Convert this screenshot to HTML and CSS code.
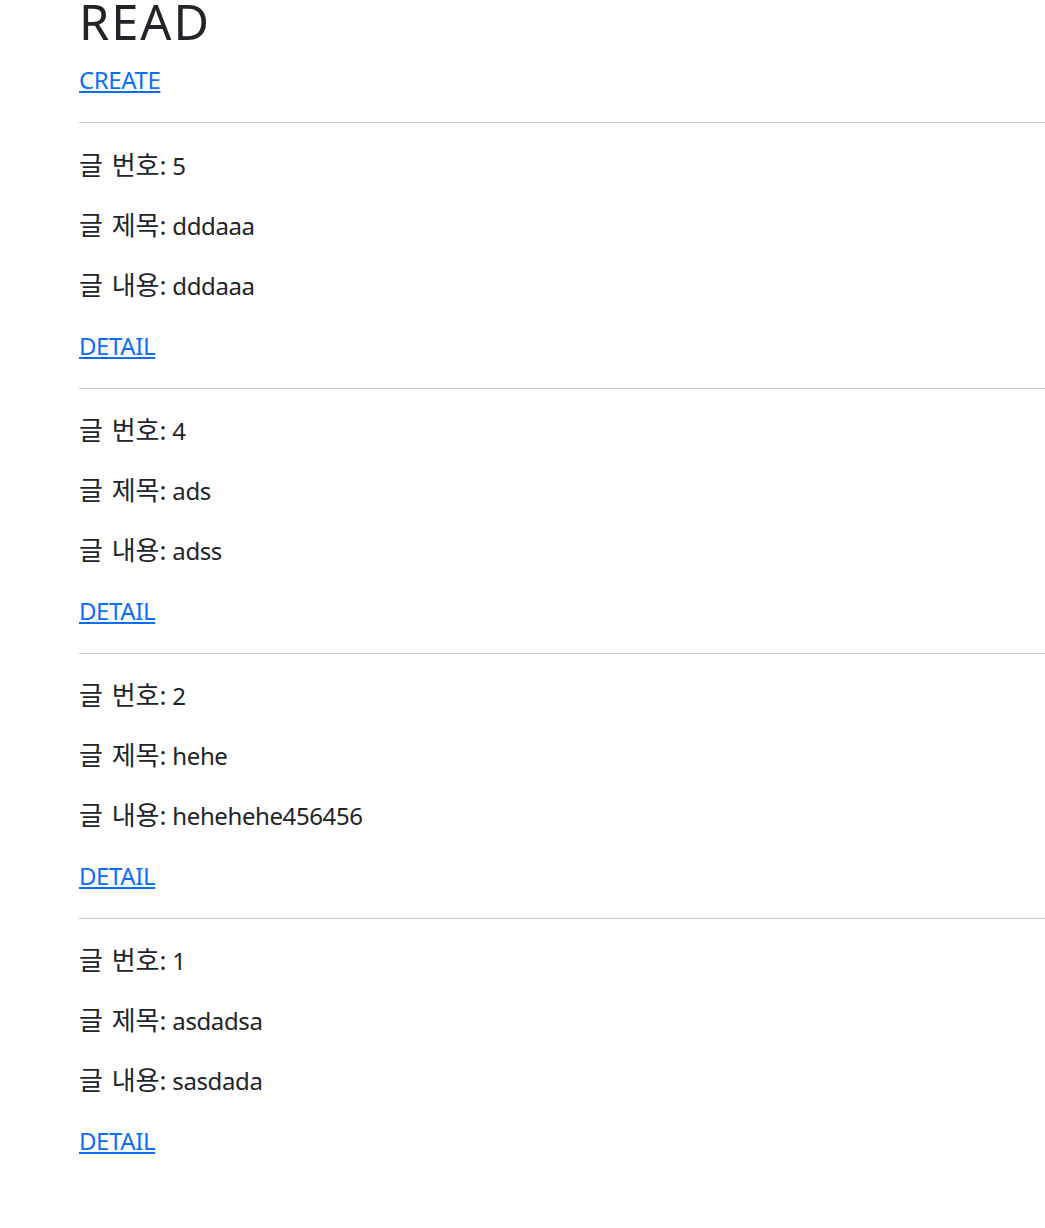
FILE: index.html
```html
<!DOCTYPE html>
<html lang="ko">
<head>
<meta charset="utf-8">
<title>READ</title>
<link rel="stylesheet" href="styles.css">
</head>
<body>
<div class="page">
  <h1 class="title">READ</h1>
  <p class="create"><a href="#">CREATE</a></p>
  <hr class="top-rule">
  <div class="post">
    <p><span class="label">글 번호:</span> 5</p>
    <p><span class="label">글 제목:</span> dddaaa</p>
    <p><span class="label">글 내용:</span> dddaaa</p>
    <p><a href="#">DETAIL</a></p>
  </div>
  <hr>
  <div class="post">
    <p><span class="label">글 번호:</span> 4</p>
    <p><span class="label">글 제목:</span> ads</p>
    <p><span class="label">글 내용:</span> adss</p>
    <p><a href="#">DETAIL</a></p>
  </div>
  <hr>
  <div class="post">
    <p><span class="label">글 번호:</span> 2</p>
    <p><span class="label">글 제목:</span> hehe</p>
    <p><span class="label">글 내용:</span> hehehehe456456</p>
    <p><a href="#">DETAIL</a></p>
  </div>
  <hr>
  <div class="post">
    <p><span class="label">글 번호:</span> 1</p>
    <p><span class="label">글 제목:</span> asdadsa</p>
    <p><span class="label">글 내용:</span> sasdada</p>
    <p><a href="#">DETAIL</a></p>
  </div>
</div>
</body>
</html>
```
FILE: styles.css
```css
html, body {
  margin: 0;
  padding: 0;
  background: #fff;
}
body {
  font-family: "Noto Sans", "Noto Sans CJK KR", sans-serif;
  font-size: 24px;
  line-height: 1.5;
  color: #212529;
  letter-spacing: -0.4px;
}
.page {
  padding-left: 79px;
}
.title {
  font-size: 48.7px;
  font-weight: 400;
  line-height: 1.2;
  letter-spacing: 2px;
  margin: -8px 0 12px 0;
}
p {
  margin: 0 0 24px 0;
}
.create {
  margin-bottom: 22px;
}
.label {
  font-size: 26px;
  line-height: 1;
  letter-spacing: 0;
  word-spacing: 2px;
}
a {
  color: #0d6efd;
  text-decoration: underline;
}
hr {
  margin: 24px 0;
  border: 0;
  border-top: 1.5px solid #212529;
  opacity: 0.25;
}
.top-rule {
  margin-bottom: 25px;
}
```
